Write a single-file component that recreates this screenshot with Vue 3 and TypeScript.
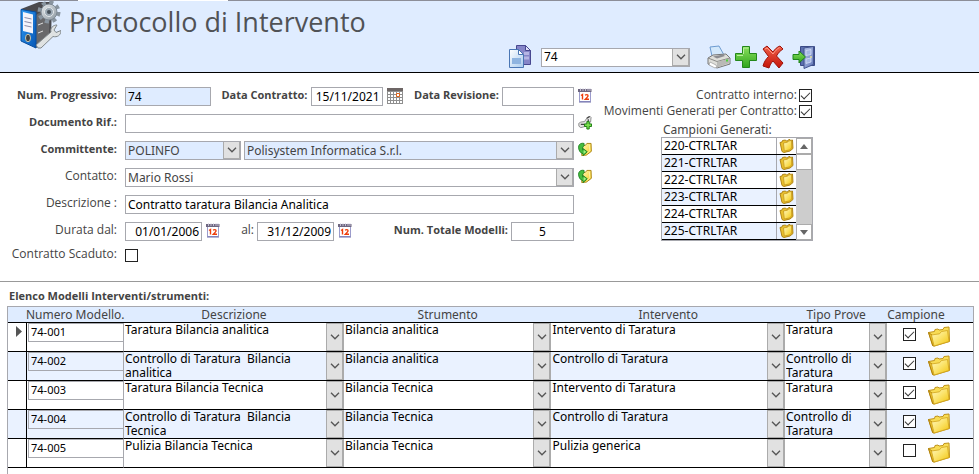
<script setup lang="ts">
import { ref } from 'vue'

interface Modello {
  numero: string
  descrizione: string
  strumento: string
  intervento: string
  tipo: string
  campione: boolean
}

const protocollo = ref('74')
const numero = ref('74')
const dataContratto = ref('15/11/2021')
const dataRevisione = ref('')
const documento = ref('')
const descrizione = ref('Contratto taratura Bilancia Analitica')
const dal = ref('01/01/2006')
const al = ref('31/12/2009')
const totale = ref('5')
const scaduto = ref(false)
const interno = ref(true)
const movimenti = ref(true)

const campioni = ref(['220-CTRLTAR', '221-CTRLTAR', '222-CTRLTAR', '223-CTRLTAR', '224-CTRLTAR', '225-CTRLTAR'])

const modelli = ref<Modello[]>([
  { numero: '74-001', descrizione: 'Taratura Bilancia analitica', strumento: 'Bilancia analitica', intervento: 'Intervento di Taratura', tipo: 'Taratura', campione: true },
  { numero: '74-002', descrizione: 'Controllo di Taratura \u00a0Bilancia analitica', strumento: 'Bilancia analitica', intervento: 'Controllo di Taratura', tipo: 'Controllo di Taratura', campione: true },
  { numero: '74-003', descrizione: 'Taratura Bilancia Tecnica', strumento: 'Bilancia Tecnica', intervento: 'Intervento di Taratura', tipo: 'Taratura', campione: true },
  { numero: '74-004', descrizione: 'Controllo di Taratura \u00a0Bilancia Tecnica', strumento: 'Bilancia Tecnica', intervento: 'Controllo di Taratura', tipo: 'Controllo di Taratura', campione: true },
  { numero: '74-005', descrizione: 'Pulizia Bilancia Tecnica', strumento: 'Bilancia Tecnica', intervento: 'Pulizia generica', tipo: '', campione: false },
])

const comboFields = ['descrizione', 'strumento', 'intervento', 'tipo'] as const
</script>

<template>
  <div class="page">
    <svg class="defs" aria-hidden="true">
      <defs>
        <linearGradient id="gFolder" x1="0" y1="0" x2="1" y2="1">
          <stop offset="0" stop-color="#fff9c4" /><stop offset=".5" stop-color="#fbe36a" /><stop offset="1" stop-color="#f2c40c" />
        </linearGradient>
        <linearGradient id="gGreen" x1="0" y1="0" x2="0" y2="1">
          <stop offset="0" stop-color="#8be05e" /><stop offset="1" stop-color="#2fa51c" />
        </linearGradient>
        <linearGradient id="gRed" x1="0" y1="0" x2="0" y2="1">
          <stop offset="0" stop-color="#f0604a" /><stop offset="1" stop-color="#c41408" />
        </linearGradient>
        <linearGradient id="gBlue" x1="0" y1="0" x2="1" y2="1">
          <stop offset="0" stop-color="#2f9bf5" /><stop offset="1" stop-color="#0656b4" />
        </linearGradient>
        <linearGradient id="gSteel" x1="0" y1="0" x2="1" y2="1">
          <stop offset="0" stop-color="#e8ecef" /><stop offset="1" stop-color="#8c979f" />
        </linearGradient>
        <linearGradient id="gPage" x1="0" y1="0" x2="1" y2="1">
          <stop offset="0" stop-color="#ffffff" /><stop offset="1" stop-color="#a9cbee" />
        </linearGradient>
        <linearGradient id="gDoor" x1="0" y1="0" x2="1" y2="1">
          <stop offset="0" stop-color="#b4c4ea" /><stop offset="1" stop-color="#6478b8" />
        </linearGradient>
      </defs>
      <symbol id="folder" viewBox="0 0 24 22">
        <path d="M1.500 6.500l6-1 .5-2 3-.5 1 1 4-.5 1-2 5-.5.500 14.500-15 4.500-2-.5z" fill="#f8dc55" stroke="#c0931a" />
        <path d="M1.500 6.500L6 20l2-.5L5 9z" fill="#e9c02c" stroke="#a87908" stroke-width=".8" />
        <path d="M4.500 9l8-1.200 2-2.300 6-1 1.500 11L7 20z" fill="url(#gFolder)" stroke="#d0a31c" stroke-width=".8" />
      </symbol>
      <symbol id="folders" viewBox="0 0 15 14">
        <path d="M1 3.500l2-.5.500-1.500 3-.5 1 1 1.500-.3.500-1 1.500-.2.500 1 2-.5.500 8.500-3 2.500-6 1.500-2-1z" fill="#e9c02e" stroke="#a87c0c" stroke-width=".9" />
        <path d="M4.500 4l4-.8 1-1.200 3-.5.300 7.500-2.500 2-5 1z" fill="url(#gFolder)" stroke="#c09016" stroke-width=".7" />
      </symbol>
      <symbol id="calendar" viewBox="0 0 14 15">
        <path d="M1.500 3.500h11v10h-11z" fill="#fff" stroke="#9c9ccc" />
        <path d="M1 14h12" stroke="#6c6ca8" />
        <path d="M0 1h13.500v3H0z" fill="#6e6780" />
        <path d="M2.500 0v3M5 0v3M7.500 0v3M10 0v3M12 0v3" stroke="#d8d4e4" stroke-width=".8" />
        <path d="M3 7.500l1.500-1v5M7 7.200c3-1.500 4 .8 2 2.300L7.300 11.300H11" fill="none" stroke="#ee3d0a" stroke-width="1.400" />
      </symbol>
      <symbol id="gridcal" viewBox="0 0 16 16">
        <path d="M0 0h16v16H0z" fill="#8f8f8f" />
        <path d="M0 0h16v3H0z" fill="#6d6665" />
        <path d="M1 4h2v2H1zM4 4h2v2H4zM7 4h2v2H7zM10 4h2v2h-2zM13 4h2v2h-2zM1 7h2v2H1zM4 7h2v2H4zM7 7h2v2H7zM13 7h2v2h-2zM1 10h2v2H1zM4 10h2v2H4zM7 10h2v2H7zM10 10h2v2h-2zM13 10h2v2h-2zM1 13h2v2H1zM4 13h2v2H4zM7 13h2v2H7zM10 13h2v2h-2zM13 13h2v2h-2z" fill="#fff" />
        <path d="M9.500 5.500h3v3h-3z" fill="#fff" stroke="#e0661c" />
      </symbol>
      <symbol id="link" viewBox="0 0 15 15">
        <path d="M.8 8.500L3 7l4-.5L10 2l3-1 1 1-.5 5-5 4.500-5.500 1.500-2-1.500z" fill="#e4e4e4" stroke="#8a8a8a" />
        <path d="M9.500 3l3-2M3 9.500h4M11 4v2" stroke="#444" stroke-width="1.300" />
        <path d="M9.500 6.500h2.500V9h2.500v2.800H12v2.700H9.500v-2.700H7V9h2.500z" fill="#7be04e" stroke="#16780c" />
      </symbol>
      <symbol id="open" viewBox="0 0 15 15">
        <path d="M4.500 3.500l3.500-.5 1.500-2 4.500 0 .3 8.500L9 13.500 4 14z" fill="url(#gFolder)" stroke="#a98312" />
        <path d="M4.500.8C2 1 .6 2.800.6 5c0 3.500 2 6.500 4.900 7v2L10 10 5.500 6.500v2C4.300 7 4.600 5 6.500 3.500V1z" fill="#45bd3e" stroke="#177d1c" stroke-width=".9" />
        <path d="M6 8l2.800 1.900L6 12.300z" fill="#a4ee84" />
        <path d="M12.200 2.500l.5 6.500-3 2.500" fill="none" stroke="#fdf3a8" />
      </symbol>
      <symbol id="chev" viewBox="0 0 10 6"><path d="M1 .8l4 4 4-4" fill="none" stroke="#555" stroke-width="1.300" /></symbol>
    </svg>

    <header class="top">
      <div class="brand">
        <svg class="logo" viewBox="0 0 42 48" aria-hidden="true">
          <path d="M2 8L20 1h11l2 3-1 32-15 11z" fill="#4a4a4e" />
          <path d="M17 14l14-9-1 31-13 10z" fill="#68686a" />
          <path d="M2 8.500L17 11v36L2 40z" fill="url(#gBlue)" stroke="#064c9e" />
          <path d="M4 11l10 2.500v19L4 30z" fill="#f3f4fc" />
          <path d="M5.500 16.500l7 1.500M5.500 20.500l7 1.500M5.500 24.500l7 1.500" stroke="#8b8ba8" />
          <ellipse cx="9" cy="37" rx="2.500" ry="3.800" fill="#444" stroke="#c7c7b0" />
          <path d="M19 24l5-2M19 32l5-2" stroke="#ddd" />
          <path d="M19 47l-2-3 15-13c-1-4 2-7 6-7l-3 5 2 2.500 5-2c0 5-4 7-8 6L22 47z" fill="#dfe2e2" stroke="#81888c" />
          <circle cx="30" cy="11" r="9.500" fill="none" stroke="#8995a0" stroke-width="4" stroke-dasharray="4 3.460" />
          <circle cx="30" cy="11" r="8" fill="url(#gSteel)" stroke="#7c8893" />
          <circle cx="30" cy="11" r="4.500" fill="#9aa7b2" stroke="#e3e8eb" />
          <circle cx="30" cy="11" r="2" fill="#455059" />
        </svg>
        <h1>Protocollo di Intervento</h1>
      </div>
      <div class="tools">
        <button class="tool copy" type="button" aria-label="Copia">
          <svg viewBox="0 0 24 24">
            <path d="M8.500 .5h9l5 5v14h-14z" fill="#8585c8" stroke="#484890" />
            <path d="M17.500 .5v5h5z" fill="#dfe0f8" stroke="#484890" />
            <path d="M16 8.500h5M16 13h5" stroke="#b5b5e4" stroke-width="3" />
            <path d="M1.500 4.500h9l5 5v13h-14z" fill="url(#gPage)" stroke="#4a76b4" />
            <path d="M10.500 4.500v5h5z" fill="#fff" stroke="#4a76b4" />
            <path d="M4 13h9v6H4z" fill="#8fb4e0" />
          </svg>
        </button>
        <span class="combo finder">
          <select v-model="protocollo" aria-label="Protocollo"><option>74</option></select>
          <span class="arrow"><svg><use href="#chev" /></svg></span>
        </span>
        <button class="tool" type="button" aria-label="Stampa">
          <svg viewBox="0 0 24 24">
            <path d="M5 11L3 2l9-1 5 9z" fill="#d3e8fb" stroke="#6d9bd0" />
            <path d="M1 13l5-3 13-1 4 4v6L10 23 1 19z" fill="#deded9" stroke="#777" />
            <path d="M1 13l9 3.500L23 13" fill="none" stroke="#8b8b88" />
            <path d="M6 11.500l10-2 2 1.500-8 2.500z" fill="#8c8c90" />
            <path d="M10 17v5.500L22.500 18v-4.500z" fill="#b9b9b6" />
            <path d="M3 17l6 3 1 2-2 1-6-3z" fill="#fff" stroke="#999" stroke-width=".7" />
            <path d="M19 15.500h2" stroke="#4fd33c" stroke-width="2" />
          </svg>
        </button>
        <button class="tool" type="button" aria-label="Nuovo">
          <svg viewBox="0 0 24 24">
            <path d="M8.500 1.500h7v7h7v7h-7v7h-7v-7h-7v-7h7z" fill="url(#gGreen)" stroke="#23871a" stroke-linejoin="round" />
            <path d="M9.500 9V3h5M3 10.500h6" fill="none" stroke="#b9f09b" />
          </svg>
        </button>
        <button class="tool" type="button" aria-label="Elimina">
          <svg viewBox="0 0 24 24">
            <path d="M2 4l4-3 6 6c2-3 4-5 7-6l3 3c-3 2-5 4-6.500 7L22 18l-4 5-6-7c-2 2-3 4-4 7l-6-2c1-4 3-7 5.500-9.500z" fill="url(#gRed)" stroke="#9e1008" stroke-linejoin="round" />
            <path d="M4 4l2-1 6 6c2-3 4-5 6.500-6.500" fill="none" stroke="#ff9a85" />
          </svg>
        </button>
        <button class="tool exit" type="button" aria-label="Esci">
          <svg viewBox="0 0 24 24">
            <path d="M8.500 1.500h14v19h-14z" fill="#5b6fae" stroke="#3a4a86" />
            <path d="M12 3l9.500-1.500v18L12 23.500z" fill="url(#gDoor)" stroke="#43548f" />
            <path d="M14 5.500l5-1v5l-5 1zM14 14l5-1v4l-5 1.500z" fill="#a5b7e4" stroke="#dde5fa" stroke-width=".7" />
            <path d="M19 11v2" stroke="#e7e39a" stroke-width="1.500" />
            <path d="M1 9.500h6V6l6.500 6L7 18v-3.500H1z" fill="url(#gGreen)" stroke="#1f861a" />
          </svg>
        </button>
      </div>
    </header>

    <main class="main">
      <section class="details">
        <form class="form" @submit.prevent>
          <div class="row">
            <label class="lead strong" for="numero">Num. Progressivo:</label>
            <input id="numero" v-model="numero" class="box tint w-num" />
            <label class="inner strong" for="contratto">Data Contratto:</label>
            <input id="contratto" v-model="dataContratto" class="box w-date right" />
            <button class="ico" type="button" aria-label="Scegli data contratto"><svg class="grid-ico"><use href="#gridcal" /></svg></button>
            <label class="inner strong" for="revisione">Data Revisione:</label>
            <input id="revisione" v-model="dataRevisione" class="box w-date right" />
            <button class="ico" type="button" aria-label="Scegli data revisione"><svg><use href="#calendar" /></svg></button>
          </div>
          <div class="row">
            <label class="lead strong" for="doc">Documento Rif.:</label>
            <input id="doc" v-model="documento" class="box grow" />
            <button class="ico" type="button" aria-label="Collega documento"><svg><use href="#link" /></svg></button>
          </div>
          <div class="row">
            <label class="lead strong" for="comm">Committente:</label>
            <span class="combo tint w-code">
              <select id="comm"><option>POLINFO</option></select>
              <span class="arrow"><svg><use href="#chev" /></svg></span>
            </span>
            <span class="combo tint grow">
              <select aria-label="Ragione sociale"><option>Polisystem Informatica S.r.l.</option></select>
              <span class="arrow"><svg><use href="#chev" /></svg></span>
            </span>
            <button class="ico" type="button" aria-label="Apri committente"><svg><use href="#open" /></svg></button>
          </div>
          <div class="row">
            <label class="lead" for="contatto">Contatto:</label>
            <span class="combo grow">
              <select id="contatto"><option>Mario Rossi</option></select>
              <span class="arrow"><svg><use href="#chev" /></svg></span>
            </span>
            <button class="ico" type="button" aria-label="Apri contatto"><svg><use href="#open" /></svg></button>
          </div>
          <div class="row no-icon">
            <label class="lead" for="descr">Descrizione :</label>
            <input id="descr" v-model="descrizione" class="box grow" />
          </div>
          <div class="row no-icon">
            <label class="lead" for="dal">Durata dal:</label>
            <input id="dal" v-model="dal" class="box w-date-l right" />
            <button class="ico" type="button" aria-label="Scegli data iniziale"><svg><use href="#calendar" /></svg></button>
            <label class="al" for="al">al:</label>
            <input id="al" v-model="al" class="box w-date-l right" />
            <button class="ico" type="button" aria-label="Scegli data finale"><svg><use href="#calendar" /></svg></button>
            <label class="inner strong" for="totale">Num. Totale Modelli:</label>
            <input id="totale" v-model="totale" class="box w-tot center" />
          </div>
          <div class="row short">
            <label class="lead" for="scaduto">Contratto Scaduto:</label>
            <input id="scaduto" v-model="scaduto" class="check" type="checkbox" />
          </div>
        </form>

        <aside class="side">
          <div class="flags">
            <label for="interno">Contratto interno:</label>
            <input id="interno" v-model="interno" class="check" type="checkbox" />
            <label for="movimenti">Movimenti Generati per Contratto:</label>
            <input id="movimenti" v-model="movimenti" class="check" type="checkbox" />
          </div>
          <div class="samples">
            <h2>Campioni Generati:</h2>
            <div class="list">
              <ul>
                <li v-for="(c, i) in campioni" :key="i">
                  <input v-model="campioni[i]" :aria-label="'Campione ' + (i + 1)" />
                  <button type="button" :aria-label="'Apri ' + c"><svg><use href="#folders" /></svg></button>
                </li>
              </ul>
              <div class="scroll">
                <button type="button" aria-label="Su"><svg viewBox="0 0 8 5"><path d="M4 0l4 5H0z" fill="#666" /></svg></button>
                <span class="thumb"></span>
                <button type="button" class="down" aria-label="Giù"><svg viewBox="0 0 8 5"><path d="M0 0h8L4 5z" fill="#666" /></svg></button>
              </div>
            </div>
          </div>
        </aside>
      </section>

      <section class="models">
        <h2>Elenco Modelli Interventi/strumenti:</h2>
        <div class="sheet">
          <table>
            <colgroup>
              <col class="c-sel" /><col class="c-num" /><col class="c-des" /><col class="c-str" /><col class="c-int" /><col class="c-tip" /><col />
            </colgroup>
            <thead>
              <tr>
                <th colspan="2" class="th-num">Numero Modello.</th>
                <th>Descrizione</th>
                <th>Strumento</th>
                <th>Intervento</th>
                <th>Tipo Prove</th>
                <th class="th-camp">Campione</th>
              </tr>
            </thead>
            <tbody>
              <tr v-for="(m, i) in modelli" :key="i">
                <td class="sel"><svg v-if="i === 0" viewBox="0 0 6 11"><path d="M0 0l6 5.500L0 11z" fill="#555" /></svg></td>
                <td class="num"><input v-model="m.numero" :aria-label="'Numero modello ' + (i + 1)" /></td>
                <td v-for="f in comboFields" :key="f">
                  <span class="cell">
                    <select v-model="m[f]" :aria-label="f + ' ' + m.numero"><option>{{ m[f] }}</option></select>
                    <span class="arrow"><svg><use href="#chev" /></svg></span>
                  </span>
                </td>
                <td>
                  <span class="camp">
                    <input v-model="m.campione" class="check" type="checkbox" :aria-label="'Campione ' + m.numero" />
                    <button type="button" :aria-label="'Apri cartella ' + m.numero"><svg><use href="#folder" /></svg></button>
                  </span>
                </td>
              </tr>
            </tbody>
          </table>
        </div>
      </section>
    </main>
  </div>
</template>

<style>
body {
  background: #fff;
}
</style>

<style scoped>
.page {
  display: flex;
  flex-direction: column;
  min-height: 100vh;
  font-family: 'Noto Sans', 'Open Sans', sans-serif;
  font-size: 12px;
  line-height: 14px;
  color: #444;
}
.page *,
.page *::before {
  box-sizing: border-box;
}
.defs {
  position: absolute;
  width: 0;
  height: 0;
}
h1,
h2,
ul {
  margin: 0;
  padding: 0;
}
button {
  display: block;
  border: 0;
  padding: 0;
  background: none;
  cursor: pointer;
}
svg {
  display: block;
}
input,
select {
  min-width: 0;
  margin: 0;
  border-radius: 0;
  font: inherit;
  color: #000;
}
select {
  appearance: none;
  border: 0;
  background: none;
  color: #444;
}

.top {
  display: grid;
  grid-template-rows: 46px auto;
  border-bottom: 1px solid #000;
  background: linear-gradient(90deg, #8c8e98 78px, #fff 78px 228px, #8c8e98 228px) 0 0 / 100% 1px no-repeat #dfecff;
}
.brand {
  display: flex;
  gap: 8px;
  padding: 1px 0 0 19px;
}
.logo {
  width: 42px;
  height: 48px;
}
h1 {
  padding-top: 3px;
  font: 400 27px/36px 'Open Sans', 'Noto Sans', sans-serif;
  color: #505256;
}
.tools {
  display: flex;
  align-items: center;
  gap: 3px;
  height: 26px;
  padding: 0 0 4px 508px;
}
.tool svg {
  width: 24px;
  height: 24px;
}
.finder {
  width: 149px;
  margin: 0 14px 0 6px;
}
.finder select {
  color: #000;
}
.exit {
  margin-left: 4px;
}

.combo {
  display: grid;
  grid-template-columns: 1fr 17px;
  height: 19px;
  border: 1px solid #a7a8ae;
  background: #fff;
}
.combo select {
  padding: 0 2px;
}
.arrow {
  display: flex;
  align-items: center;
  justify-content: center;
  border: 1px solid #ababab;
  background: #e1e1e1;
  pointer-events: none;
}
.arrow svg {
  width: 10px;
  height: 6px;
}
.combo .arrow {
  border-width: 0 1px 1px;
}
.combo.tint,
.box.tint {
  background: #dfecff;
}

.main {
  flex: 1;
  display: flex;
  flex-direction: column;
}
.details {
  display: flex;
  padding: 14px 0 19px;
  border-bottom: 1px solid #999;
}
.form {
  flex: 1;
  display: flex;
  flex-direction: column;
  gap: 8px;
}
.row {
  display: flex;
  align-items: center;
  height: 19px;
}
.short {
  height: 13px;
}
.no-icon {
  padding-right: 18px;
}
.form label {
  padding-bottom: 3px;
}
.form label,
.flags label {
  font-family: 'Open Sans', 'Noto Sans', sans-serif;
}
.lead {
  width: 117px;
  margin-right: 8px;
  text-align: right;
}
.inner {
  flex: 1;
  margin-right: 3px;
  text-align: right;
  white-space: nowrap;
}
.form .strong,
.models h2 {
  font-family: 'Open Sans', 'Noto Sans', sans-serif;
  font-size: 11px;
  font-weight: 700;
}
.al {
  width: 34px;
  margin-right: 3px;
  text-align: right;
}
.box {
  height: 19px;
  border: 1px solid #a7a8ae;
  padding: 0 2px;
  background: #fff;
}
.grow {
  flex: 1;
}
.w-num {
  width: 86px;
}
.w-date {
  width: 72px;
}
.w-date-l {
  width: 77px;
}
.w-tot {
  width: 63px;
}
.w-code {
  width: 116px;
  margin-right: 3px;
}
.right {
  text-align: right;
}
.center {
  text-align: center;
}
.ico {
  margin: 0 0 2px 4px;
}
.ico svg {
  width: 14px;
  height: 15px;
}
.ico .grid-ico {
  width: 16px;
  height: 16px;
}
.check {
  appearance: none;
  display: grid;
  place-items: center;
  width: 13px;
  height: 13px;
  border: 1px solid #222;
  background: #fff;
}
.check:checked::before {
  content: '';
  width: 9px;
  height: 5px;
  border: solid #333;
  border-width: 0 0 1px 1px;
  transform: translateY(-1px) rotate(-45deg);
}

.side {
  width: 387px;
  padding: 1px 0 0 13px;
}
.flags {
  display: grid;
  grid-template-columns: 192px 13px;
  gap: 2px;
  align-items: center;
}
.flags label {
  justify-self: end;
  white-space: nowrap;
}
.samples {
  width: 152px;
  margin: 5px 0 0 56px;
}
.samples h2 {
  padding-left: 2px;
  font-size: 12px;
  font-weight: 400;
  line-height: 14px;
}
.list {
  display: grid;
  grid-template-columns: minmax(0, 1fr) 16px;
  border: 1px solid #a7a8ae;
}
.list li {
  display: flex;
  height: 17px;
  border-bottom: 1px solid #000;
}
.list li:nth-child(even) {
  background: #eaf2ff;
}
.list li input {
  flex: 1;
  width: 0;
  border: 0;
  border-right: 1px solid #a7a8ae;
  padding: 0 2px;
  background: none;
}
.list li button svg {
  width: 15px;
  height: 14px;
  margin: 0 2px;
}
.scroll {
  display: flex;
  flex-direction: column;
  background: #cdcdcd;
}
.scroll button,
.thumb {
  width: 16px;
  height: 16px;
  border: 1px solid #ababab;
  background: #fff;
}
.scroll svg {
  width: 8px;
  height: 5px;
  margin: 0 auto;
}
.scroll .down {
  margin-top: auto;
}

.models {
  flex: 1;
  display: flex;
  flex-direction: column;
  padding: 7px 5px 0 7px;
}
.models h2 {
  padding: 0 2px 3px;
  line-height: 14px;
}
.sheet {
  flex: 1;
  border: solid #a7a8ae;
  border-width: 1px 1px 0;
}
table {
  width: 100%;
  table-layout: fixed;
  border-spacing: 0;
}
.c-sel {
  width: 19px;
}
.c-num {
  width: 97px;
}
.c-des {
  width: 22.8%;
}
.c-str {
  width: 21.5%;
}
.c-int {
  width: 24.2%;
}
.c-tip {
  width: 10.6%;
}
th,
td {
  padding: 0;
  border-bottom: 1px solid #000;
}
th {
  height: 16px;
  background: #dfecff;
  font-weight: 400;
  white-space: nowrap;
}
.th-num {
  padding-left: 18px;
  text-align: left;
}
.th-camp {
  text-align: left;
}
td {
  height: 29px;
  vertical-align: top;
}
tbody tr:nth-child(even) {
  background: #eaf2ff;
}
.sel {
  border-right: 1px solid #000;
}
.sel svg {
  width: 6px;
  height: 11px;
  margin: 3px 0 0 8px;
}
.num {
  padding-left: 1px;
  border-right: 1px solid #a7a8ae;
}
.num input {
  display: block;
  width: 100%;
  height: 19px;
  border: solid #a7a8ae;
  border-width: 1px 0 1px 1px;
  padding: 0 2px 3px;
  background: none;
  font-size: 11px;
}
.cell {
  display: grid;
  grid-template-columns: 1fr 18px;
  height: 28px;
}
.cell select {
  align-self: start;
  padding: 0 1px;
  line-height: 14px;
  color: #000;
  white-space: normal;
}
.cell .arrow {
  border-right-width: 2px;
}
.camp {
  display: flex;
  align-items: center;
  gap: 11px;
  height: 28px;
  padding-left: 16px;
}
.camp .check {
  margin-bottom: 5px;
}
.camp svg {
  width: 24px;
  height: 22px;
}
</style>
